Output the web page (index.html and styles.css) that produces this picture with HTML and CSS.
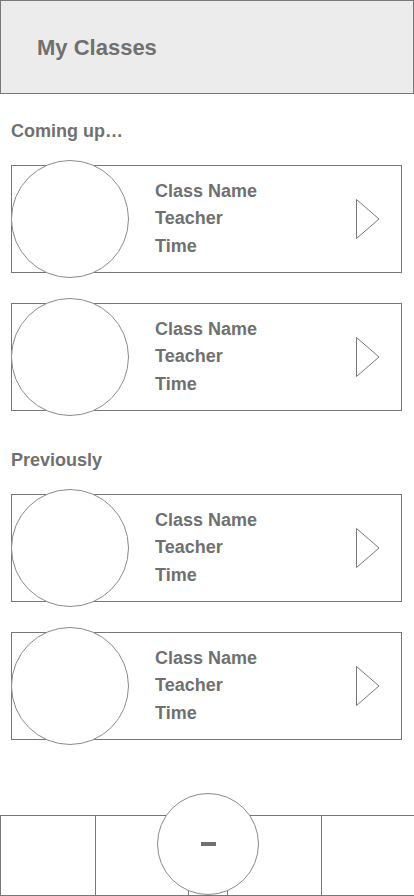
FILE: index.html
```html
<!DOCTYPE html>
<html lang="en">
<head>
    <meta charset="UTF-8">
    <meta name="viewport" content="width=device-width, initial-scale=1.0">
    <title>My Classes</title>
    <link rel="stylesheet" href="styles.css">
</head>
<body>
    <header class="top-bar">
        <h1>My Classes</h1>
    </header>

    <main class="content">
        <!-- Upcoming classes -->
        <section class="group">
            <h2 class="group-title">Coming up…</h2>
            <div class="class-card">
                <div class="avatar"></div>
                <div class="class-info">
                    <p>Class Name</p>
                    <p>Teacher</p>
                    <p>Time</p>
                </div>
                <svg class="arrow" width="24" height="40" viewBox="0 0 24 40"><polygon points="0.5,0.5 23,20 0.5,39.5" fill="none" stroke="#777" stroke-width="1"/></svg>
            </div>
            <div class="class-card">
                <div class="avatar"></div>
                <div class="class-info">
                    <p>Class Name</p>
                    <p>Teacher</p>
                    <p>Time</p>
                </div>
                <svg class="arrow" width="24" height="40" viewBox="0 0 24 40"><polygon points="0.5,0.5 23,20 0.5,39.5" fill="none" stroke="#777" stroke-width="1"/></svg>
            </div>
        </section>

        <!-- Past classes -->
        <section class="group past">
            <h2 class="group-title">Previously</h2>
            <div class="class-card">
                <div class="avatar"></div>
                <div class="class-info">
                    <p>Class Name</p>
                    <p>Teacher</p>
                    <p>Time</p>
                </div>
                <svg class="arrow" width="24" height="40" viewBox="0 0 24 40"><polygon points="0.5,0.5 23,20 0.5,39.5" fill="none" stroke="#777" stroke-width="1"/></svg>
            </div>
            <div class="class-card">
                <div class="avatar"></div>
                <div class="class-info">
                    <p>Class Name</p>
                    <p>Teacher</p>
                    <p>Time</p>
                </div>
                <svg class="arrow" width="24" height="40" viewBox="0 0 24 40"><polygon points="0.5,0.5 23,20 0.5,39.5" fill="none" stroke="#777" stroke-width="1"/></svg>
            </div>
        </section>
    </main>

    <!-- Bottom tab bar -->
    <nav class="tab-bar">
        <div class="tab"></div>
        <div class="tab"></div>
        <div class="tab"></div>
        <div class="tab"></div>
        <div class="tab"></div>
        <button class="add-btn"><span class="minus"></span></button>
    </nav>
</body>
</html>
```

FILE: styles.css
```css
body {
    font-family: 'Liberation Sans', Arial, sans-serif;
    font-weight: bold;
    color: #707070;
    background-color: #fff;
    margin: 0;
    padding: 0;
    width: 414px;
    overflow-x: hidden;
}
.top-bar {
    height: 94px;
    box-sizing: border-box;
    border: 1px solid #777;
    background-color: #ececec;
    display: flex;
    align-items: center;
    padding-left: 36px;
    padding-top: 2px;
}
.top-bar h1 {
    margin: 0;
    font-size: 22px;
    line-height: 26px;
}
.content {
    padding: 0 12px 0 11px;
}
.group-title {
    margin: 27px 0 23px;
    font-size: 18px;
    line-height: 21px;
}
.past .group-title {
    margin-top: 39px;
}
.class-card {
    height: 108px;
    box-sizing: border-box;
    border: 1px solid #777;
    display: flex;
    align-items: center;
    margin-bottom: 30px;
}
.class-card:last-child {
    margin-bottom: 0;
}
.avatar {
    flex: none;
    width: 118px;
    height: 118px;
    box-sizing: border-box;
    margin-left: -1px;
    border: 1px solid #8a8a8a;
    border-radius: 50%;
    background-color: #fff;
}
.class-info {
    margin-left: 26px;
    font-size: 18px;
    line-height: 27.5px;
}
.class-info p {
    margin: 0;
}
.arrow {
    margin-left: auto;
    margin-right: 21px;
}
.tab-bar {
    position: relative;
    margin-top: 75px;
    height: 81px;
    box-sizing: border-box;
    border-top: 1px solid #777;
    border-bottom: 1px solid #777;
    display: grid;
    grid-template-columns: 95px 93px 39px 94px 1fr;
}
.tab {
    border-left: 1px solid #777;
}
.add-btn {
    position: absolute;
    left: 157px;
    top: -23px;
    width: 102px;
    height: 102px;
    padding: 0;
    box-sizing: border-box;
    border: 1px solid #8a8a8a;
    border-radius: 50%;
    background-color: #fff;
    display: flex;
    align-items: center;
    justify-content: center;
}
.minus {
    width: 15px;
    height: 4px;
    background-color: #707070;
}
```
